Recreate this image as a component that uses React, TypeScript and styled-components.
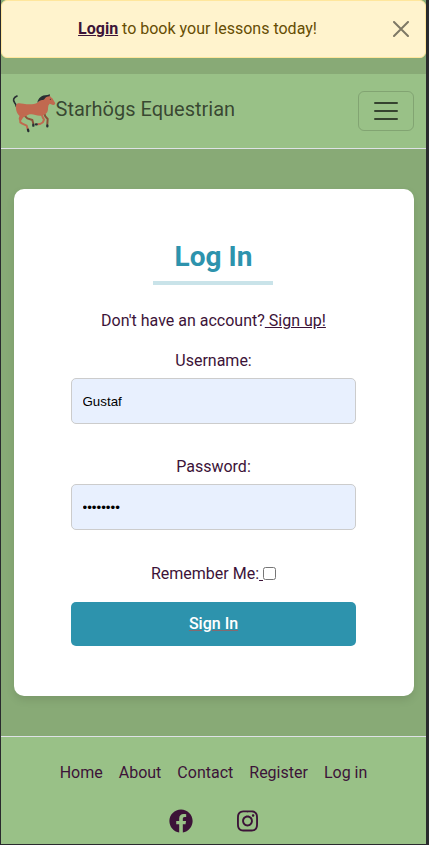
import React from "react";
import styled, { createGlobalStyle } from "styled-components";

const GlobalStyle = createGlobalStyle`
  *, *::before, *::after { box-sizing: border-box; }
  body {
    margin: 0;
    background: #292a2d;
    color: #3c1338;
    font: 400 16px/24px Roboto, sans-serif;
    overflow: hidden;
  }
`;

const Page = styled.div`
  display: flex;
  flex-direction: column;
  height: 844px;
  margin: 0 3px 1px 1px;
  background: #88aa76;
`;

const Alert = styled.div`
  display: flex;
  align-items: center;
  height: 58px;
  flex: none;
  margin-bottom: 16px;
  padding: 0 15px;
  border: 1px solid #ffe69c;
  border-radius: 6px;
  background: #fff3cd;
  color: #664d03;
`;

const AlertText = styled.p`
  flex: 1;
  margin: 0;
  padding: 0 14px 1px 0;
  text-align: center;
`;

const AlertLink = styled.a`
  color: #3c1338;
  font-weight: 700;
  text-decoration: underline;
`;

const CloseButton = styled.button`
  display: flex;
  width: 18px;
  height: 18px;
  padding: 1px;
  border: 0;
  background: none;
  opacity: 0.5;
`;

const Navbar = styled.nav`
  display: flex;
  align-items: center;
  justify-content: space-between;
  flex: none;
  height: 75px;
  padding: 0 12px 0 11px;
  border-bottom: 1px solid #dee2e6;
  background: #99c187;
`;

const Brand = styled.a`
  display: flex;
  align-items: center;
  color: rgba(0, 0, 0, 0.65);
  font-size: 20px;
  line-height: 30px;
`;

const BrandName = styled.span`
  padding-bottom: 5px;
  margin-left: -0.5px;
`;

const Horse = styled.svg`
  width: 44px;
  height: 40px;
  margin-top: 5px;
`;

const Toggler = styled.button`
  display: flex;
  align-items: center;
  justify-content: center;
  width: 56px;
  height: 40px;
  padding: 0;
  border: 1px solid rgba(0, 0, 0, 0.15);
  border-radius: 6px;
  background: none;
`;

const Card = styled.main`
  flex: none;
  width: 400px;
  height: 507px;
  margin: 40px 0 40px 13px;
  padding: 50px 58px 50px 57px;
  border-radius: 10px;
  background: #fff;
  box-shadow: 0 4px 8px rgba(0, 0, 0, 0.1);
  text-align: center;
`;

const Title = styled.h1`
  width: 120px;
  height: 46px;
  margin: 0 auto 24px 82px;
  padding-left: 1px;
  border-bottom: 4px solid #c9e3e9;
  color: #2d93ad;
  font-size: 28px;
  font-weight: 700;
  line-height: 36px;
`;

const Text = styled.p`
  margin: 0 0 16px;
`;

const Link = styled.a`
  color: #3c1338;
  text-decoration: underline;
  white-space: pre;
`;

const Field = styled.div`
  height: 106px;
`;

const Label = styled.label`
  display: block;
  margin-bottom: 5px;
`;

const Input = styled.input`
  display: block;
  width: 100%;
  height: 46px;
  padding: 1px 10.5px;
  border: 1px solid #ccc;
  border-radius: 5px;
  outline: 0;
  background: #e8f0fe;
  color: #000;
  font: 400 13.333px "Liberation Sans", Arial, sans-serif;
`;

const Remember = styled.div`
  display: flex;
  justify-content: center;
  align-items: center;
  height: 24px;
  margin-top: 1px;
`;

const Checkbox = styled.input`
  width: 13px;
  height: 13px;
  margin: 0 0 2px;
`;

const SubmitButton = styled.button`
  display: block;
  width: 100%;
  height: 44px;
  margin-top: 16px;
  padding: 0;
  border: 0;
  border-radius: 5px;
  background: #2d93ad;
  color: #fff;
  font: 500 16px/24px Roboto, sans-serif;
  text-decoration: underline;
  text-decoration-color: #85696f;
`;

const Footer = styled.footer`
  flex: 1;
  border-top: 1px solid #dee2e6;
  background: #99c187;
`;

const FooterNav = styled.nav`
  display: flex;
  justify-content: center;
  gap: 16px;
  margin-top: 24px;
`;

const FooterLink = styled.a`
  color: #3c1338;
`;

const Socials = styled.div`
  display: flex;
  justify-content: center;
  gap: 44px;
  margin-top: 24px;
`;

const SocialIcon = styled.svg<{ $size: number }>`
  width: ${(p) => p.$size}px;
  height: 24px;
  fill: #3c1338;
`;

const links = ["Home", "About", "Contact", "Register", "Log in"];

export default function App() {
  return (
    <>
      <GlobalStyle />
      <Page>
        <Alert>
          <AlertText>
            <AlertLink>Login</AlertLink> to book your lessons today!
          </AlertText>
          <CloseButton aria-label="Close">
            <svg width="16" height="16" viewBox="0 0 16 16">
              <path d="M1 1 15 15M15 1 1 15" stroke="#000" strokeWidth="2" strokeLinecap="round" />
            </svg>
          </CloseButton>
        </Alert>
        <Navbar>
          <Brand>
            <Horse viewBox="36 42 132 120" fill="none" strokeLinecap="round" strokeLinejoin="round">
              <path d="M51 48C40 53 38 60 44 68Q48 73 49 79" stroke="#292f33" strokeWidth="5" />
              <path d="M76 100 76 109 82 115 97 120 100 131" stroke="#8b5038" strokeWidth="6" />
              <path d="M132 98 136 109 143 117 142 132" stroke="#8b5038" strokeWidth="6" />
              <path d="M48 77C49 68 58 69 70 71C88 74 103 73 112 68L124 57Q132 47 145 48L149 46L152 51L157 55L166 70Q164 77 157 74L149 71Q144 74 144 85C145 98 134 108 120 107C107 106 100 101 89 103C81 105 75 112 66 112C53 107 46 91 48 77Z" fill="#c1694f" />
              <path d="M66 101 66 109 61 116" stroke="#c1694f" strokeWidth="10" />
              <path d="M60 112 61 127 67 131 80 137 83 147" stroke="#c1694f" strokeWidth="6" />
              <path d="M124 100Q128 113 132 119Q130 128 122 131L114 133" stroke="#c1694f" strokeWidth="6" />
              <path d="M112 68C114 55 124 45 142 45L150 43L149 49C141 49 136 53 133 58C127 62 120 59 112 68Z" fill="#292f33" />
              <path d="m84 149 1 4M100 134v3M108 133h2M142 136v3" stroke="#292f33" strokeWidth="7" />
              <circle cx="151" cy="58" r="1.6" fill="#292f33" />
            </Horse>
            <BrandName>Starhögs Equestrian</BrandName>
          </Brand>
          <Toggler aria-label="Toggle navigation">
            <svg width="30" height="30" viewBox="0 0 30 30">
              <path d="M4 7h22M4 15h22M4 23h22" stroke="#000" strokeOpacity=".65" strokeWidth="2" strokeLinecap="round" />
            </svg>
          </Toggler>
        </Navbar>
        <Card>
          <Title>Log In</Title>
          <Text>
            Don't have an account?<Link> Sign up!</Link>
          </Text>
          <Field>
            <Label htmlFor="username">Username:</Label>
            <Input id="username" defaultValue="Gustaf" />
          </Field>
          <Field>
            <Label htmlFor="password">Password:</Label>
            <Input id="password" type="password" defaultValue="lesson24" />
          </Field>
          <Remember>
            <label htmlFor="remember">Remember Me:</label>
            <Link> </Link>
            <Checkbox id="remember" type="checkbox" />
          </Remember>
          <SubmitButton>Sign In</SubmitButton>
        </Card>
        <Footer>
          <FooterNav>
            {links.map((name) => (
              <FooterLink key={name}>{name}</FooterLink>
            ))}
          </FooterNav>
          <Socials>
            <SocialIcon $size={24} viewBox="0 0 512 512">
              <path d="M504 256C504 119 393 8 256 8S8 119 8 256c0 123.78 90.69 226.38 209.25 245V327.69h-63V256h63v-54.64c0-62.15 37-96.48 93.67-96.48 27.14 0 55.52 4.84 55.52 4.84v61h-31.28c-30.8 0-40.41 19.12-40.41 38.73V256h68.78l-11 71.69h-57.78V501C413.31 482.38 504 379.78 504 256z" />
            </SocialIcon>
            <SocialIcon $size={21} viewBox="0 0 448 512">
              <path d="M224.1 141c-63.6 0-114.9 51.3-114.9 114.9s51.3 114.9 114.9 114.9S339 319.5 339 255.9 287.7 141 224.1 141zm0 189.6c-41.1 0-74.7-33.5-74.7-74.7s33.5-74.7 74.7-74.7 74.7 33.5 74.7 74.7-33.6 74.7-74.7 74.7zm146.4-194.3c0 14.9-12 26.8-26.8 26.8-14.9 0-26.8-12-26.8-26.8s12-26.8 26.8-26.8 26.8 12 26.8 26.8zm76.1 27.2c-1.7-35.9-9.9-67.7-36.2-93.9-26.2-26.2-58-34.4-93.9-36.2-37-2.1-147.9-2.1-184.9 0-35.8 1.7-67.6 9.9-93.9 36.1s-34.4 58-36.2 93.9c-2.1 37-2.1 147.9 0 184.9 1.7 35.9 9.9 67.7 36.2 93.9s58 34.4 93.9 36.2c37 2.1 147.9 2.1 184.9 0 35.9-1.7 67.7-9.9 93.9-36.2 26.2-26.2 34.4-58 36.2-93.9 2.1-37 2.1-147.8 0-184.8zM398.8 388c-7.8 19.6-22.9 34.7-42.6 42.6-29.5 11.7-99.5 9-132.1 9s-102.7 2.6-132.1-9c-19.6-7.8-34.7-22.9-42.6-42.6-11.7-29.5-9-99.5-9-132.1s-2.6-102.7 9-132.1c7.8-19.6 22.9-34.7 42.6-42.6 29.5-11.7 99.5-9 132.1-9s102.7-2.6 132.1 9c19.6 7.8 34.7 22.9 42.6 42.6 11.7 29.5 9 99.5 9 132.1s2.7 102.7-9 132.1z" />
            </SocialIcon>
          </Socials>
        </Footer>
      </Page>
    </>
  );
}
